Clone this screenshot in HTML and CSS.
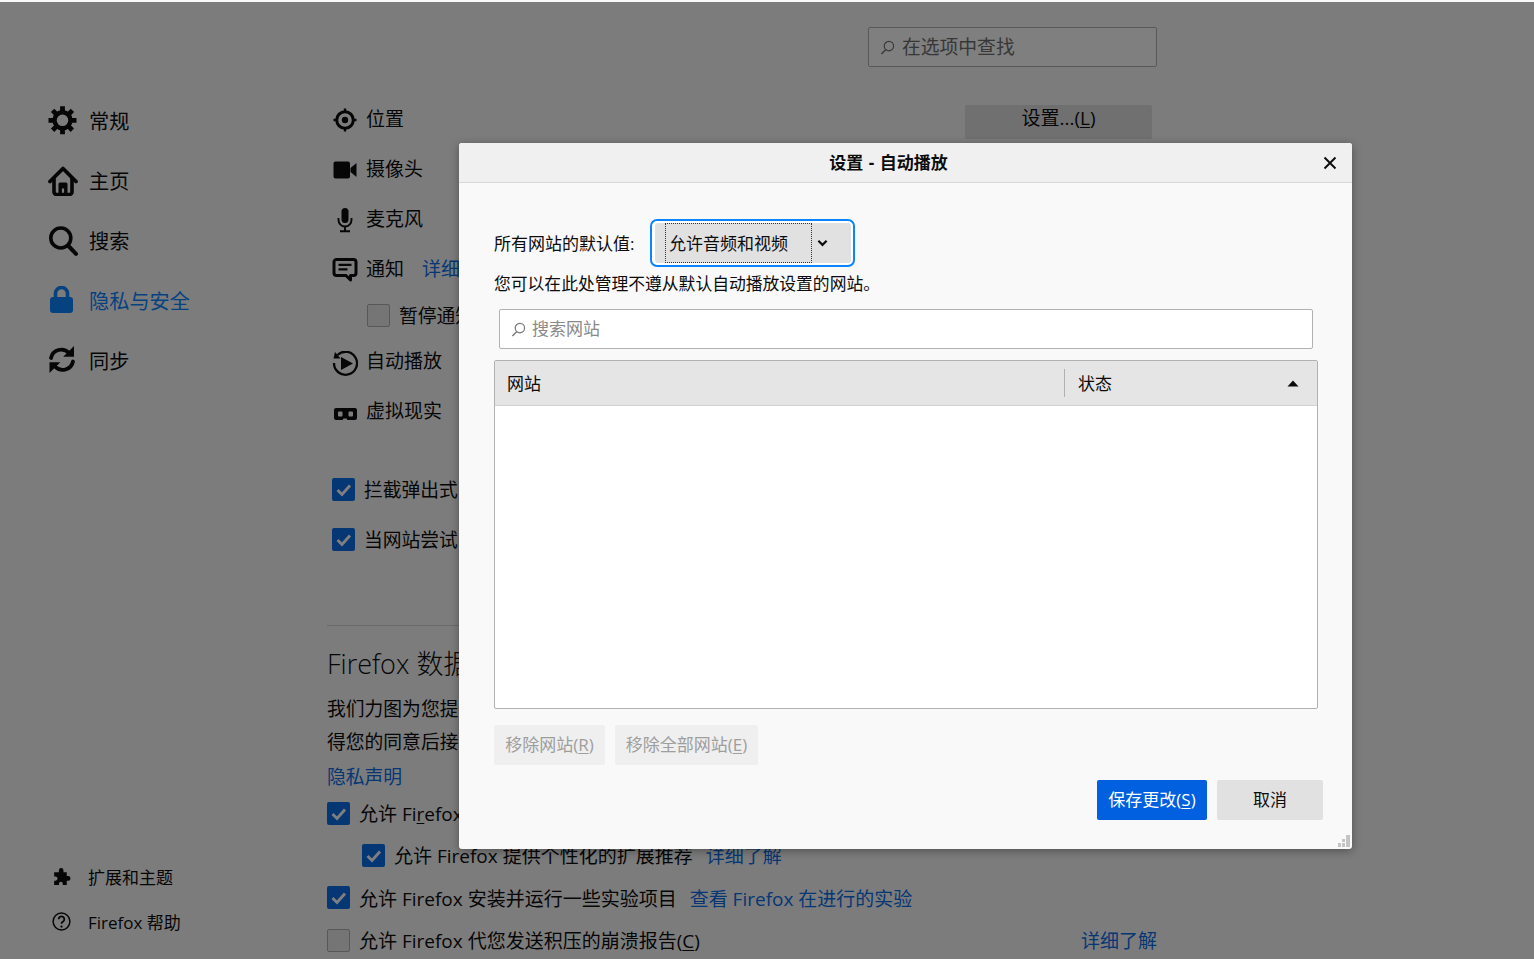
FILE: index.html
```html
<!DOCTYPE html>
<html lang="zh-CN">
<head>
<meta charset="utf-8">
<title>设置 - 自动播放</title>
<link rel="stylesheet" href="styles.css">
</head>
<body>
<div class="page">
  <nav class="sidebar">
    <ul class="nav-list">
      <li class="nav-item">
        <svg class="nav-icon" viewBox="0 0 30 30"><g fill="none" stroke="currentColor"><circle cx="14.500" cy="14.300" r="8" stroke-width="4.400"/><path stroke-width="4.800" d="M14.500 .300v5M14.500 23.300v5M.500 14.300h5M23.500 14.300h5M4.600 4.400l3.600 3.600M20.800 20.600l3.600 3.600M24.400 4.400l-3.600 3.600M8.200 20.600l-3.600 3.600"/></g></svg>
        <span>常规</span>
      </li>
      <li class="nav-item">
        <svg class="nav-icon" viewBox="0 0 30 30"><path d="M2 15.500 15 2.500 28 15.500" fill="none" stroke="currentColor" stroke-width="3.800" stroke-linecap="round" stroke-linejoin="round"/><path d="M6 12v14a2.500 2.500 0 0 0 2.500 2.500h13a2.500 2.500 0 0 0 2.500-2.500V12" fill="none" stroke="currentColor" stroke-width="3.600"/><path d="M10.500 28V18a1.500 1.500 0 0 1 1.500-1.500h6a1.500 1.500 0 0 1 1.500 1.500v10h-3.400v-5.500h-2.200V28z" fill="currentColor"/></svg>
        <span>主页</span>
      </li>
      <li class="nav-item">
        <svg class="nav-icon" viewBox="0 0 30 30"><circle cx="12.800" cy="12" r="10" fill="none" stroke="currentColor" stroke-width="3.600"/><path d="M20 19.500 28 27.800" stroke="currentColor" stroke-width="4" stroke-linecap="round"/></svg>
        <span>搜索</span>
      </li>
      <li class="nav-item nav-active">
        <svg class="nav-icon" viewBox="0 0 30 30"><path d="M7.500 12V7.500a6 6 0 0 1 12 0V12" fill="none" stroke="currentColor" stroke-width="3.600"/><rect x="2" y="11" width="23" height="16" rx="3" fill="currentColor"/></svg>
        <span>隐私与安全</span>
      </li>
      <li class="nav-item">
        <svg class="nav-icon" viewBox="0 0 30 30"><path d="M3 12a10.500 10.500 0 0 1 18-5" fill="none" stroke="currentColor" stroke-width="3.800" stroke-linecap="round"/><path d="M26 0v10.800H15.200z" fill="currentColor"/><path d="M25 15.500a10.500 10.500 0 0 1-18 5" fill="none" stroke="currentColor" stroke-width="3.800" stroke-linecap="round"/><path d="M1.500 27V16.200h10.800z" fill="currentColor"/></svg>
        <span>同步</span>
      </li>
    </ul>
    <ul class="foot-list">
      <li class="foot-item">
        <svg class="foot-icon" viewBox="0 0 20 20"><path d="M3 6h4.500V4.200a2.200 2.200 0 0 1 4.400 0V6H15v3.600h1.400a2.200 2.200 0 0 1 0 4.400H15v4h-3.800v-1.300a1.800 1.800 0 0 0-3.600 0V18H3v-4h1.200a2 2 0 0 0 0-4H3z" fill="currentColor"/></svg>
        <span>扩展和主题</span>
      </li>
      <li class="foot-item">
        <svg class="foot-icon" viewBox="0 0 20 20"><circle cx="10" cy="10" r="8" fill="none" stroke="currentColor" stroke-width="1.400"/><path d="M7.300 7.800a2.700 2.700 0 1 1 4.200 2.300c-1 .6-1.500 1.100-1.500 2.100" fill="none" stroke="currentColor" stroke-width="1.700"/><circle cx="10" cy="14.800" r="1.100" fill="currentColor"/></svg>
        <span>Firefox 帮助</span>
      </li>
    </ul>
  </nav>

  <main class="main">
    <div class="find-row">
      <div class="find-box">
        <svg class="find-icon" viewBox="0 0 16 16"><circle cx="9.500" cy="6.500" r="5" fill="none" stroke="currentColor" stroke-width="1.300"/><path d="M6 10.500 1.500 15" stroke="currentColor" stroke-width="1.500"/></svg>
        <span class="lift">在选项中查找</span>
      </div>
    </div>

    <div class="perm-row perm-first">
      <svg class="perm-icon" viewBox="0 0 26 26"><circle cx="13" cy="13" r="8.300" fill="none" stroke="currentColor" stroke-width="3"/><circle cx="13" cy="13" r="3.200" fill="currentColor"/><path d="M13 1.500v3M13 21.500v3M1.500 13h3M21.500 13h3" stroke="currentColor" stroke-width="2.400"/></svg>
      <span class="perm-label">位置</span>
      <div class="perm-action"><button class="btn-settings" type="button">设置...(<u>L</u>)</button></div>
    </div>
    <div class="perm-row">
      <svg class="perm-icon" viewBox="0 0 26 26"><rect x="1.500" y="4.500" width="16.500" height="17" rx="2" fill="currentColor"/><path d="M18.500 11 24.500 6v14L18.500 15z" fill="currentColor"/></svg>
      <span class="perm-label">摄像头</span>
    </div>
    <div class="perm-row">
      <svg class="perm-icon" viewBox="0 0 26 26"><rect x="9.500" y="1" width="7" height="15" rx="3.500" fill="currentColor"/><path d="M6.500 11v2a6.500 6.500 0 0 0 13 0v-2M13 19.500v4M8 24.200h10" fill="none" stroke="currentColor" stroke-width="1.900"/></svg>
      <span class="perm-label">麦克风</span>
    </div>
    <div class="perm-row">
      <svg class="perm-icon" viewBox="0 0 26 26"><path d="M4.500 2.500h17A2.500 2.500 0 0 1 24 5v11a2.500 2.500 0 0 1-2.500 2.500H18.500v4.500l-4.500-4.500H4.500A2.500 2.500 0 0 1 2 16V5a2.500 2.500 0 0 1 2.500-2.500z" fill="none" stroke="currentColor" stroke-width="3" stroke-linejoin="round"/><path d="M6.500 7.800h13M6.500 12.300h9" stroke="currentColor" stroke-width="2.200"/></svg>
      <span class="perm-label">通知</span>
      <a class="link perm-link">详细了解</a>
    </div>
    <div class="sub-check">
      <span class="check check-off"></span>
      <span>暂停通知直至 Firefox 重启</span>
    </div>
    <div class="perm-row">
      <svg class="perm-icon perm-icon-low" viewBox="0 0 26 26"><path d="M5.500 4A11.500 11.500 0 1 1 2 12" fill="none" stroke="currentColor" stroke-width="2.300"/><path d="M1.500 7.500 3 1 8.500 7.500z" fill="currentColor"/><path d="M9 6 21 12.500 9 19z" fill="currentColor"/></svg>
      <span class="perm-label">自动播放</span>
    </div>
    <div class="perm-row">
      <svg class="perm-icon perm-icon-low" viewBox="0 0 26 26"><path fill-rule="evenodd" d="M4 7h19a2 2 0 0 1 2 2v8a2 2 0 0 1-2 2H15.500l-1-1.500h-3l-1 1.500H4a2 2 0 0 1-2-2V9a2 2 0 0 1 2-2zM7 10.500a1 1 0 0 0-1 1v3a1 1 0 0 0 1 1h2.500a1 1 0 0 0 1-1v-3a1 1 0 0 0-1-1zM17.500 10.500a1 1 0 0 0-1 1v3a1 1 0 0 0 1 1H20a1 1 0 0 0 1-1v-3a1 1 0 0 0-1-1z" fill="currentColor"/></svg>
      <span class="perm-label">虚拟现实</span>
    </div>

    <div class="block-check">
      <span class="check check-on"><svg viewBox="0 0 23 23"><path d="M5.500 12 10 16.500 18 7.500" fill="none" stroke="#fff" stroke-width="2.800"/></svg></span>
      <span>拦截弹出式窗口</span>
    </div>
    <div class="block-check">
      <span class="check check-on"><svg viewBox="0 0 23 23"><path d="M5.500 12 10 16.500 18 7.500" fill="none" stroke="#fff" stroke-width="2.800"/></svg></span>
      <span>当网站尝试安装附加组件时警告您</span>
    </div>

    <hr class="divider">

    <h2 class="section-title">Firefox 数据收集与使用</h2>
    <p class="section-text section-first">我们力图为您提供选择权,并只收集我们为众人提供和改进 Firefox 所需的信息。我们仅在征</p>
    <p class="section-text">得您的同意后接收个人信息。</p>
    <a class="link section-link">隐私声明</a>

    <div class="data-row">
      <span class="check check-on"><svg viewBox="0 0 23 23"><path d="M5.500 12 10 16.500 18 7.500" fill="none" stroke="#fff" stroke-width="2.800"/></svg></span>
      <span>允许 Fi<u>r</u>efox 向 Mozilla 发送技术信息及交互数据</span>
    </div>
    <div class="data-row data-b">
      <span class="check check-on"><svg viewBox="0 0 23 23"><path d="M5.500 12 10 16.500 18 7.500" fill="none" stroke="#fff" stroke-width="2.800"/></svg></span>
      <span>允许 Firefox 提供个性化的扩展推荐</span>
      <a class="link data-link">详细了解</a>
    </div>
    <div class="data-row data-c">
      <span class="check check-on"><svg viewBox="0 0 23 23"><path d="M5.500 12 10 16.500 18 7.500" fill="none" stroke="#fff" stroke-width="2.800"/></svg></span>
      <span>允许 Firefox 安装并运行一些实验项目</span>
      <a class="link data-link">查看 Firefox 在进行的实验</a>
    </div>
    <div class="data-row">
      <span class="check check-off"></span>
      <span>允许 Firefox 代您发送积压的崩溃报告(<u>C</u>)</span>
      <a class="link data-end">详细了解</a>
    </div>
  </main>
</div>

<div class="overlay"></div>

<section class="dialog">
  <header class="dialog-head">
    <span class="dialog-title">设置 - 自动播放</span>
    <svg class="dialog-close" viewBox="0 0 14 14"><path d="M1.500 1.500 12.500 12.500M12.500 1.500 1.500 12.500" stroke="currentColor" stroke-width="1.900"/></svg>
  </header>
  <div class="dialog-body">
    <div class="default-row">
      <span class="default-label">所有网站的默认值:</span>
      <div class="select-ring">
        <div class="select">
          <span class="select-value">允许音频和视频</span>
          <span class="select-arrow"><svg viewBox="0 0 12 8"><path d="M1.500 1.500 6 6 10.500 1.500" fill="none" stroke="currentColor" stroke-width="2.400"/></svg></span>
        </div>
      </div>
    </div>
    <p class="desc">您可以在此处管理不遵从默认自动播放设置的网站。</p>
    <div class="site-search">
      <svg class="site-search-icon" viewBox="0 0 16 16"><circle cx="9.500" cy="6.500" r="5" fill="none" stroke="currentColor" stroke-width="1.300"/><path d="M6 10.500 1.500 15" stroke="currentColor" stroke-width="1.500"/></svg>
      <span class="site-search-text">搜索网站</span>
    </div>
    <div class="table">
      <div class="table-head">
        <span class="col-site">网站</span>
        <span class="col-state">状态</span>
        <svg class="sort-arrow" viewBox="0 0 12 7"><path d="M6 .5 11.500 6.500H.5z" fill="currentColor"/></svg>
      </div>
      <div class="table-body"></div>
    </div>
    <div class="remove-row">
      <button class="btn-disabled btn-remove-one" type="button">移除网站(<u>R</u>)</button>
      <button class="btn-disabled btn-remove-all" type="button">移除全部网站(<u>E</u>)</button>
    </div>
    <div class="action-row">
      <button class="btn-primary" type="button">保存更改(<u>S</u>)</button>
      <button class="btn-cancel" type="button">取消</button>
    </div>
  </div>
  <svg class="resizer" viewBox="0 0 12 12"><path d="M8 0h4v4H8zM4 4h3v3H4zM8 4h4v4H8zM0 8h3v4H0zM4 8h3v4H4zM8 8h4v4H8z" fill="#c4c4c4"/></svg>
</section>
</body>
</html>
```

FILE: styles.css
```css
* { box-sizing: border-box; }

html, body {
  margin: 0;
  height: 959px;
  overflow: hidden;
  background: #f9f9fa;
}

body {
  color: #0c0c0d;
  font-family: "Open Sans", "Noto Sans CJK SC", sans-serif;
  font-size: 18.8px;
  font-weight: 400;
}

ul { list-style: none; margin: 0; padding: 0; }
p, h2 { margin: 0; }
u { text-underline-offset: 2px; }
button { font: inherit; border: 0; padding: 0; }

.page {
  display: flex;
  height: 959px;
}

.lift { padding-bottom: 2px; }

/* Sidebar */
.sidebar {
  width: 327px;
  flex: none;
  display: flex;
  flex-direction: column;
  padding: 91px 0 15px 48px;
}

.nav-item {
  height: 60px;
  display: flex;
  align-items: center;
  gap: 11px;
  font-size: 20.2px;
}

.nav-item span { padding-bottom: 2px; }

.nav-active { color: #0a84ff; }

.nav-icon { width: 30px; height: 30px; flex: none; }

.foot-list { margin-top: auto; padding-left: 3px; }

.foot-item {
  height: 45px;
  display: flex;
  align-items: center;
  gap: 16px;
  font-size: 17px;
}

.foot-icon { width: 21px; height: 21px; flex: none; }

/* Main column */
.main {
  width: 830px;
  flex: none;
  padding-top: 27px;
}

.find-row { display: flex; justify-content: flex-end; }

.find-box {
  width: 289px;
  height: 40px;
  display: flex;
  align-items: center;
  gap: 7px;
  padding-left: 11px;
  border: 1px solid #b1b1b3;
  border-radius: 2px;
  background: #fff;
  color: #6e6e70;
}

.find-icon { width: 15px; height: 15px; flex: none; color: #737373; }

.perm-row {
  height: 50px;
  display: flex;
  align-items: center;
  padding-left: 5px;
  font-size: 19px;
}

.perm-first { margin-top: 27px; }

.perm-icon { width: 26px; height: 26px; flex: none; margin-top: 2px; }

.perm-icon-low { margin-top: 6px; }

.perm-label { margin-left: 8px; padding-bottom: 2px; }

.perm-link { margin-left: 18px; padding-bottom: 2px; }

.perm-action { margin-left: auto; margin-right: 5px; }

.btn-settings {
  width: 187px;
  height: 34px;
  display: block;
  background: #e0e0e1;
  border-radius: 2px;
  color: #0c0c0d;
  line-height: 26px;
  margin-top: 6px;
  padding-bottom: 8px;
}

.link { color: #0a6fe8; }

.check {
  width: 23px;
  height: 23px;
  flex: none;
  display: block;
  border-radius: 2px;
}

.check svg { display: block; width: 23px; height: 23px; }

.check-on { background: #0a6fe8; }

.check-off {
  background: #ebebeb;
  border: 1px solid #b1b1b3;
}

.sub-check {
  height: 42px;
  display: flex;
  align-items: center;
  gap: 9px;
  padding-left: 40px;
}

.block-check {
  height: 50px;
  display: flex;
  align-items: center;
  gap: 9px;
  padding-left: 5px;
}

.perm-row + .block-check { margin-top: 28px; }

.divider {
  margin: 61px 0 0;
  border: 0;
  border-top: 1px solid #d7d7db;
  height: 1px;
}

.section-title {
  margin-top: 18px;
  height: 38px;
  line-height: 40px;
  font-size: 27px;
  font-weight: 300;
}

.section-text {
  height: 33px;
  line-height: 33px;
  white-space: nowrap;
}

.section-first { margin-top: 11px; }

.section-link {
  display: block;
  height: 33px;
  line-height: 36px;
}

.data-row {
  display: flex;
  align-items: center;
  gap: 9px;
  height: 42px;
  white-space: nowrap;
  font-size: 19px;
}

.data-b { padding-left: 35px; }
.data-c { height: 43px; }

.data-link { margin-left: 4px; }
.data-end { margin-left: auto; }

/* Overlay */
.overlay {
  position: absolute;
  left: 0;
  right: 0;
  top: 2px;
  bottom: 0;
  background: rgba(0, 0, 0, .5);
}

/* Dialog */
.dialog {
  position: absolute;
  left: 459px;
  top: 143px;
  width: 893px;
  height: 706px;
  display: flex;
  flex-direction: column;
  background: #f9f9fa;
  border-radius: 3px;
  box-shadow: 0 2px 10px rgba(0, 0, 0, .35);
  font-size: 17px;
  overflow: hidden;
}

.dialog-head {
  height: 40px;
  flex: none;
  display: flex;
  align-items: center;
  justify-content: center;
  background: #f0f0f0;
  border-bottom: 1px solid #d7d7d7;
  position: relative;
}

.dialog-title {
  font-weight: 700;
  word-spacing: 1px;
  padding-bottom: 2px;
  position: relative;
  left: -17px;
}

.dialog-close {
  position: absolute;
  right: 15px;
  top: 13px;
  width: 14px;
  height: 14px;
}

.dialog-body {
  flex: 1;
  display: flex;
  flex-direction: column;
  padding: 36px 34px 29px 35px;
}

.default-row {
  display: flex;
  align-items: center;
  height: 48px;
}

.default-label { width: 156px; padding-bottom: 1px; }

.select-ring {
  width: 205px;
  height: 48px;
  padding: 2px;
  border: 2px solid #0a84ff;
  border-radius: 7px;
  background: #fff;
}

.select {
  height: 40px;
  margin-left: 1px;
  width: 196px;
  display: flex;
  background: #e1e1e1;
  border-radius: 3px;
  padding-left: 10px;
}

.select-value {
  width: 147px;
  height: 40px;
  line-height: 40px;
  padding-left: 3px;
  border: 1px dotted #333;
}

.select-arrow {
  width: 21px;
  display: flex;
  align-items: center;
  justify-content: center;
}

.select-arrow svg { width: 11px; height: 8px; }

.desc {
  height: 34px;
  line-height: 34px;
  margin-bottom: 8px;
  font-size: 16.8px;
}

.site-search {
  height: 40px;
  flex: none;
  margin: 0 5px;
  display: flex;
  align-items: center;
  gap: 6px;
  padding-left: 11px;
  background: #fff;
  border: 1px solid #b1b1b3;
  border-radius: 2px;
  color: #8a8a8c;
}

.site-search-text { padding-bottom: 4px; }

.site-search-icon { width: 15px; height: 15px; flex: none; color: #777; }

.table {
  margin-top: 11px;
  height: 349px;
  flex: none;
  display: flex;
  flex-direction: column;
  border: 1px solid #b1b1b3;
  border-radius: 2px;
  background: #fff;
}

.table-head {
  height: 45px;
  flex: none;
  display: flex;
  align-items: center;
  background: #e5e5e5;
  border-bottom: 1px solid #d2d2d2;
  padding-left: 12px;
}

.col-site { width: 557px; padding-bottom: 2px; }

.col-state {
  height: 28px;
  line-height: 30px;
  width: 223px;
  padding-left: 13px;
  border-left: 1px solid #b1b1b3;
}

.sort-arrow { width: 12px; height: 7px; flex: none; }

.table-body { flex: 1; }

.remove-row {
  display: flex;
  gap: 10px;
  margin-top: 16px;
}

.btn-disabled {
  height: 40px;
  padding-bottom: 4px;
  background: #efefef;
  color: #9e9e9e;
  border-radius: 2px;
}

.btn-remove-one { width: 111px; }
.btn-remove-all { width: 143px; }

.action-row {
  display: flex;
  justify-content: flex-end;
  gap: 10px;
  margin: 15px -5px 0 0;
}

.btn-primary {
  width: 110px;
  height: 40px;
  padding-bottom: 4px;
  background: #0060df;
  color: #fff;
  border-radius: 2px;
}

.btn-cancel {
  width: 106px;
  height: 40px;
  padding-bottom: 4px;
  background: #e1e1e1;
  color: #0c0c0d;
  border-radius: 2px;
}

.resizer {
  position: absolute;
  right: 2px;
  bottom: 2px;
  width: 12px;
  height: 12px;
}
```
